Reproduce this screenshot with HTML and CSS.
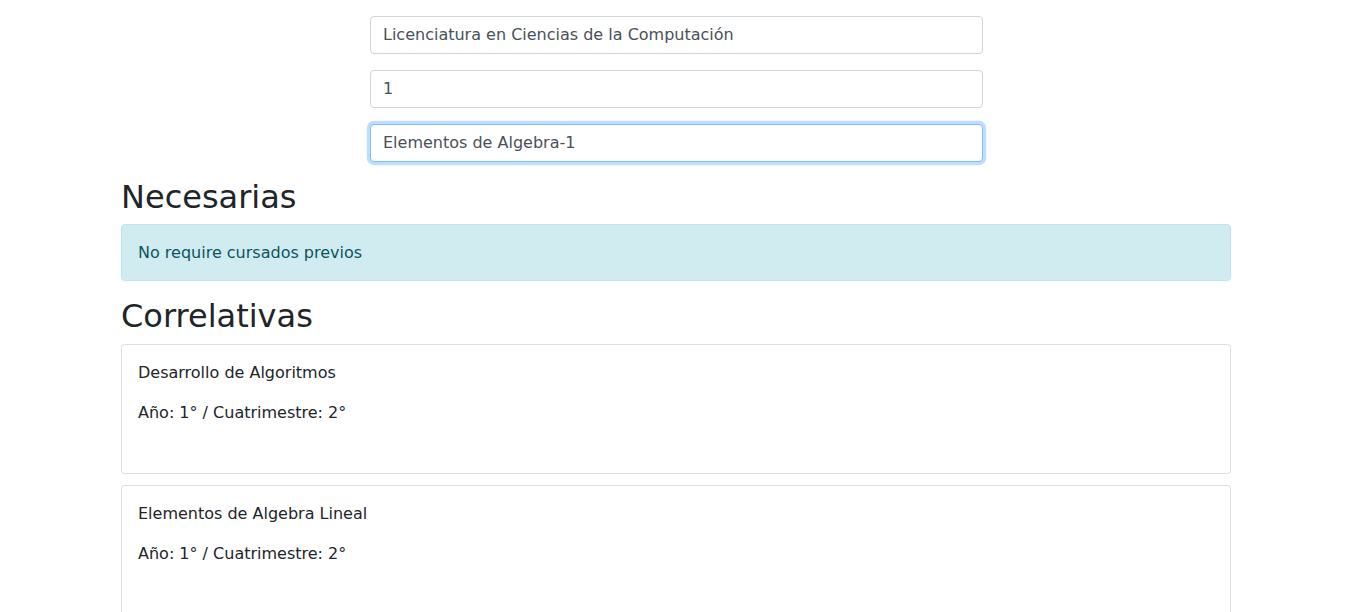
FILE: index.html
```html
<!DOCTYPE html>
<html lang="es">
<head>
<meta charset="utf-8">
<title>Correlativas</title>
<link rel="stylesheet" href="styles.css">
</head>
<body>
<main class="container">
  <form class="selector">
    <input class="field" type="text" value="Licenciatura en Ciencias de la Computación">
    <input class="field" type="text" value="1">
    <input class="field field-focus" type="text" value="Elementos de Algebra-1">
  </form>
  <h2 class="section-title">Necesarias</h2>
  <div class="alert-info">No require cursados previos</div>
  <h2 class="section-title">Correlativas</h2>
  <div class="card-list">
    <div class="card">
      <p class="card-line">Desarrollo de Algoritmos</p>
      <p class="card-line">Año: 1° / Cuatrimestre: 2°</p>
    </div>
    <div class="card">
      <p class="card-line">Elementos de Algebra Lineal</p>
      <p class="card-line">Año: 1° / Cuatrimestre: 2°</p>
    </div>
  </div>
</main>
</body>
</html>
```

FILE: styles.css
```css
* { box-sizing: border-box; }
html, body { margin: 0; padding: 0; }
body {
  font-family: "DejaVu Sans", sans-serif;
  font-size: 16px;
  line-height: 24px;
  color: #212529;
  background: #fff;
}
.container {
  width: 1111px;
  margin: 0 0 0 120px;
  padding: 16px 0 0 1px;
}
.selector {
  width: 613px;
  margin: 0 0 16px 249px;
  display: flex;
  flex-direction: column;
  gap: 16px;
}
.field {
  display: block;
  width: 100%;
  height: 38px;
  padding: 5px 12px 7px;
  font-family: "DejaVu Sans", sans-serif;
  font-size: 16px;
  line-height: 24px;
  color: #495057;
  background: #fff;
  border: 1px solid #ced4da;
  border-radius: 4px;
  outline: none;
}
.field-focus {
  border-color: #80bdff;
  box-shadow: 0 0 0 3.2px rgba(0, 123, 255, 0.25);
}
.section-title {
  font-size: 32px;
  font-weight: 500;
  line-height: 38.4px;
  margin: 0 0 8px;
}
.alert-info {
  padding: 16px 16px 15px 16px;
  margin-bottom: 16px;
  color: #0c5460;
  background: #d1ecf1;
  border: 1px solid #bee5eb;
  border-radius: 4px;
}
.card-list {
  display: flex;
  flex-direction: column;
  gap: 11px;
}
.card {
  border: 1px solid rgba(0, 0, 0, 0.125);
  border-radius: 4px;
  padding: 16px 16px 32px 16px;
  background: #fff;
}
.card-line {
  margin: 0 0 16px;
}
```
